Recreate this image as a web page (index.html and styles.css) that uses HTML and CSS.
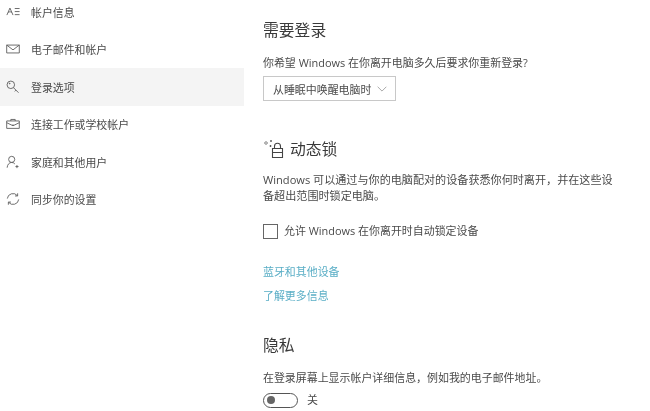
FILE: index.html
```html
<!DOCTYPE html>
<html lang="zh-CN">
<head>
    <meta charset="UTF-8">
    <title>登录选项</title>
    <link rel="stylesheet" href="styles.css">
</head>
<body>
<div class="page">
    <nav class="sidebar">
        <div class="nav-item">
            <svg class="nav-icon" viewBox="0 0 16 16"><path d="M1 11.500 4.500 3.500 8 11.500M2.500 8.500c1.200-1 2.800-1 4 0M10 4h5.500M10 7.500h5.500M10 11h5.500"/></svg>
            <span>帐户信息</span>
        </div>
        <div class="nav-item">
            <svg class="nav-icon" viewBox="0 0 16 16"><path d="M.8 3.500h14.400v9H.8zM.8 3.500 8 9l7.200-5.500"/></svg>
            <span>电子邮件和帐户</span>
        </div>
        <div class="nav-item active">
            <svg class="nav-icon" viewBox="0 0 16 16"><path d="M5.500 1.200a4.300 4.300 0 1 0 0 8.600 4.300 4.300 0 0 0 0-8.600zM8.500 8.700l5.800 5.800M11.500 11.500l-1.500 1.500M3.800 3.600h.8v.8h-.8z"/></svg>
            <span>登录选项</span>
        </div>
        <div class="nav-item">
            <svg class="nav-icon" viewBox="0 0 16 16"><path d="M.8 4.500h14.400v8.500H.8zM5.500 4.500V2.800h5v1.700M.8 6.500 8 10l7.200-3.500M7.300 9h1.400"/></svg>
            <span>连接工作或学校帐户</span>
        </div>
        <div class="nav-item">
            <svg class="nav-icon" viewBox="0 0 16 16"><path d="M6.500 1.500a3.500 3.500 0 1 0 0 7 3.500 3.500 0 0 0 0-7zM1.300 14.500c.3-3.500 2.300-6 5.200-6 1.500 0 2.700.6 3.600 1.700M12.500 11.500v3.500M10.800 13.200h3.500"/></svg>
            <span>家庭和其他用户</span>
        </div>
        <div class="nav-item">
            <svg class="nav-icon" viewBox="0 0 16 16"><path d="M1.500 7.500A6.500 6.500 0 0 1 13 4.200M14.500 8.500A6.500 6.500 0 0 1 3 11.800M13.300 1.500v3h-3M2.700 14.500v-3h3"/></svg>
            <span>同步你的设置</span>
        </div>
    </nav>

    <main class="content">
        <h2 class="heading first">需要登录</h2>
        <p class="text ask">你希望 Windows 在你离开电脑多久后要求你重新登录?</p>
        <div class="dropdown">
            <span>从睡眠中唤醒电脑时</span>
            <svg class="chevron" viewBox="0 0 12 7"><path d="M.8.800 6 6l5.200-5.200"/></svg>
        </div>

        <div class="lock-title">
            <svg class="lock-icon" viewBox="0 0 21 21"><path d="M9.500 9.500h10v9h-10zM11.500 9.500V7.300a3 3 0 0 1 6 0v2.200M9.500 13.500h10"/><path class="dots" d="M3 2.500l1.500 1.500L3 5.500 1.500 4zM7.500 1.500h1v1h-1zM7 6.500h1v1H7z"/></svg>
            <h2 class="heading">动态锁</h2>
        </div>
        <p class="text para">Windows 可以通过与你的电脑配对的设备获悉你何时离开，并在这些设备超出范围时锁定电脑。</p>
        <label class="check-row">
            <span class="checkbox"></span>
            <span class="text">允许 Windows 在你离开时自动锁定设备</span>
        </label>
        <a class="link link-one">蓝牙和其他设备</a>
        <a class="link link-two">了解更多信息</a>

        <h2 class="heading privacy">隐私</h2>
        <p class="text privacy-text">在登录屏幕上显示帐户详细信息，例如我的电子邮件地址。</p>
        <div class="toggle-row">
            <span class="toggle"><span class="knob"></span></span>
            <span class="text">关</span>
        </div>
    </main>
</div>
</body>
</html>
```

FILE: styles.css
```css
html, body {
    margin: 0;
    height: 411px;
    overflow: hidden;
    background: #fff;
}

.page {
    display: flex;
    font-family: "Open Sans", "Noto Sans CJK SC", sans-serif;
    color: #3c3c3c;
    filter: blur(0.5px);
}

.sidebar {
    width: 244px;
    margin-top: -7px;
    flex-shrink: 0;
}

.nav-item {
    display: flex;
    align-items: center;
    height: 37.5px;
    padding-left: 6px;
    font-size: 10.9px;
    color: #4a4a4a;
}

.nav-item.active {
    background: #f4f4f4;
}

.nav-icon {
    width: 14px;
    height: 14px;
    margin-right: 11px;
    fill: none;
    stroke: #5a5a5a;
    stroke-width: 1;
}

.content {
    padding-left: 19px;
    width: 360px;
}

.heading {
    margin: 0;
    font-size: 15.8px;
    font-weight: 400;
    line-height: 22px;
    color: #3a3a3a;
}

.heading.first {
    margin-top: 19px;
}

.text {
    margin: 0;
    font-size: 10.95px;
    line-height: 16px;
    color: #4a4a4a;
}

.ask {
    margin-top: 14px;
}

.dropdown {
    display: flex;
    align-items: center;
    justify-content: space-between;
    box-sizing: border-box;
    width: 133px;
    height: 25px;
    margin-top: 5px;
    padding: 0 8px 0 9px;
    border: 1px solid #c8c8c8;
    font-size: 10.95px;
    color: #4a4a4a;
}

.chevron {
    width: 10px;
    height: 6px;
    fill: none;
    stroke: #999;
    stroke-width: 1;
}

.lock-title {
    display: flex;
    align-items: center;
    gap: 6px;
    margin-top: 37px;
}

.lock-icon {
    width: 21px;
    height: 21px;
    fill: none;
    stroke: #444;
    stroke-width: 1.1;
}

.lock-icon .dots {
    stroke-width: 0.8;
}

.para {
    width: 352px;
    margin-top: 12px;
    font-size: 11.1px;
}

.check-row {
    display: flex;
    align-items: center;
    gap: 6px;
    margin-top: 19px;
}

.checkbox {
    box-sizing: border-box;
    width: 15px;
    height: 15px;
    border: 1.5px solid #666;
}

.link {
    display: block;
    font-size: 10.95px;
    line-height: 16px;
    color: #5aaec6;
}

.link-one {
    margin-top: 25px;
}

.link-two {
    margin-top: 8px;
}

.privacy {
    margin-top: 30px;
}

.privacy-text {
    margin-top: 14px;
}

.toggle-row {
    display: flex;
    align-items: center;
    gap: 9px;
    margin-top: 6px;
}

.toggle {
    display: flex;
    align-items: center;
    box-sizing: border-box;
    width: 35px;
    height: 15px;
    padding-left: 3px;
    border: 1.5px solid #555;
    border-radius: 8px;
}

.knob {
    width: 8px;
    height: 8px;
    border-radius: 50%;
    background: #666;
}
```
